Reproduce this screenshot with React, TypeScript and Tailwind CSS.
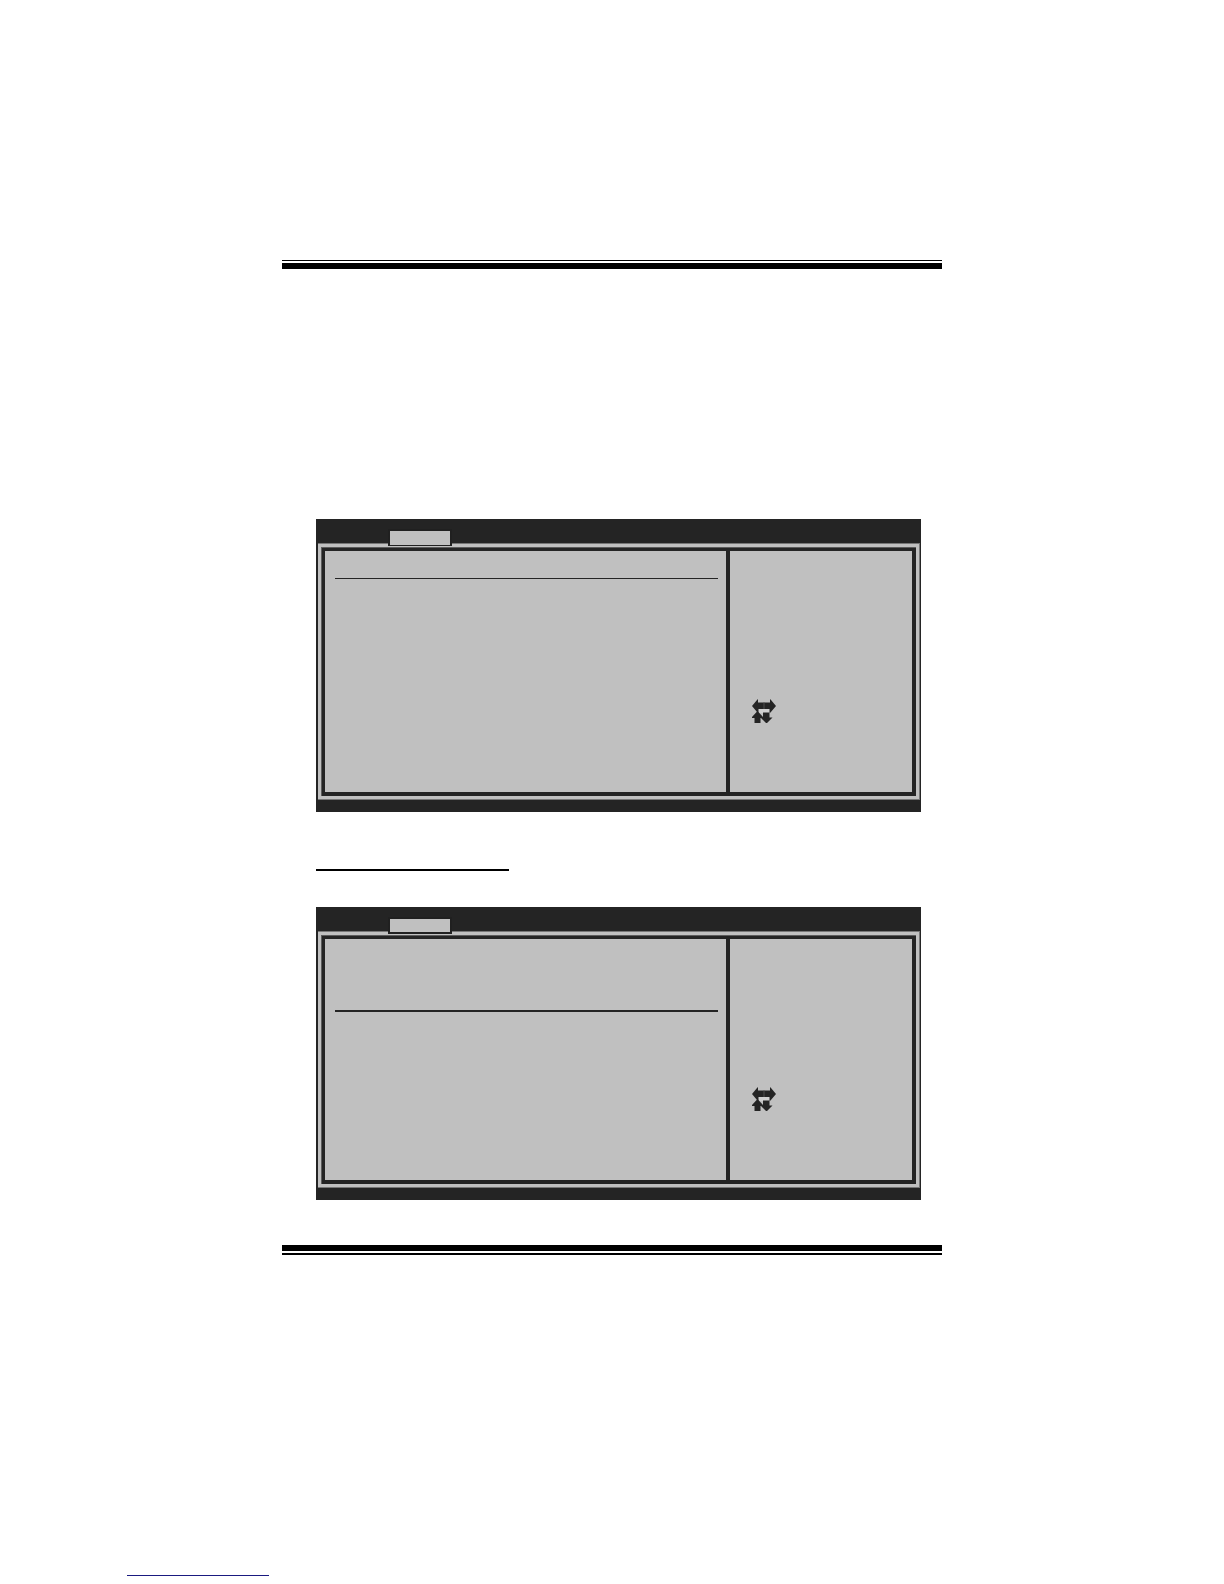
interface Props {
  tabClass: string;
  lineClass: string;
}

const ArrowKeys = () => {
  return (
    <svg width="24" height="24" viewBox="0 0 24 24" aria-hidden="true">
      <rect x="6" y="10" width="12" height="4" fill="#d0d0d0" />
      <path
        d="M0 7 L5 1 L6 0 V3.5 H18 V0 L19 1 L24 7 L18.5 13.5 L17.5 14 V10 H6.5 V14 L5 13 Z"
        fill="#242424"
      />
      <path d="M12 3.5 V10" stroke="#4c4c4c" strokeWidth="1" />
      <path
        d="M5.5 12 L11 18 V13.5 H17.5 V18.5 H20.5 L14.5 24.5 L9 19 H8.5 V24 H2.5 V19 H0 V18 Z"
        fill="#242424"
      />
    </svg>
  );
};

const BiosScreen = (props: Props) => {
  return (
    <section className="ml-[34px] mr-[21px] bg-[#242424]">
      <header className="relative h-6">
        <div
          className={`absolute left-[72px] top-[10px] w-16 border-2 border-[#202020] bg-[#c0c0c0] ${props.tabClass}`}
        />
      </header>
      <div className="ml-[2px] mr-px border-y border-r border-[#777777] bg-[#c0c0c0] p-[3px]">
        <div className="border-l border-t border-[#5c5c5c]">
          <div className="grid grid-cols-[1fr_182px] gap-1 border-b-4 border-l-[3px] border-r-4 border-t-[3px] border-[#242424] bg-[#242424]">
            <div className="min-h-[241px] bg-[#c0c0c0] pl-[10px] pr-2">
              <hr className={`border-[#242424] ${props.lineClass}`} />
            </div>
            <div className="bg-[#c0c0c0] pl-[22px] pt-[148px]">
              <ArrowKeys />
            </div>
          </div>
        </div>
      </div>
      <div className="h-3" />
    </section>
  );
};

const App = () => {
  return (
    <div className="bg-white">
      <main className="px-[282px] pt-[260px]">
        <hr className="border-t border-black" />
        <hr className="mt-[2px] border-t-[6px] border-black" />

        <div className="pt-[250px]">
          <BiosScreen tabClass="h-[17px] border-b" lineClass="mt-[27px] border-t" />
        </div>

        <hr className="ml-[34px] mt-[57px] w-[193px] border-t-2 border-black" />

        <div className="pt-9">
          <BiosScreen tabClass="h-[17px]" lineClass="mt-[71px] border-t-2" />
        </div>

        <hr className="mt-[45px] border-t-[6px] border-black" />
        <hr className="mt-[2px] border-t-2 border-black" />
      </main>

      <footer className="pb-2 pl-[127px] pt-80">
        <hr className="w-[142px] border-t border-[#1a1a80]" />
      </footer>
    </div>
  );
};

export default App;
